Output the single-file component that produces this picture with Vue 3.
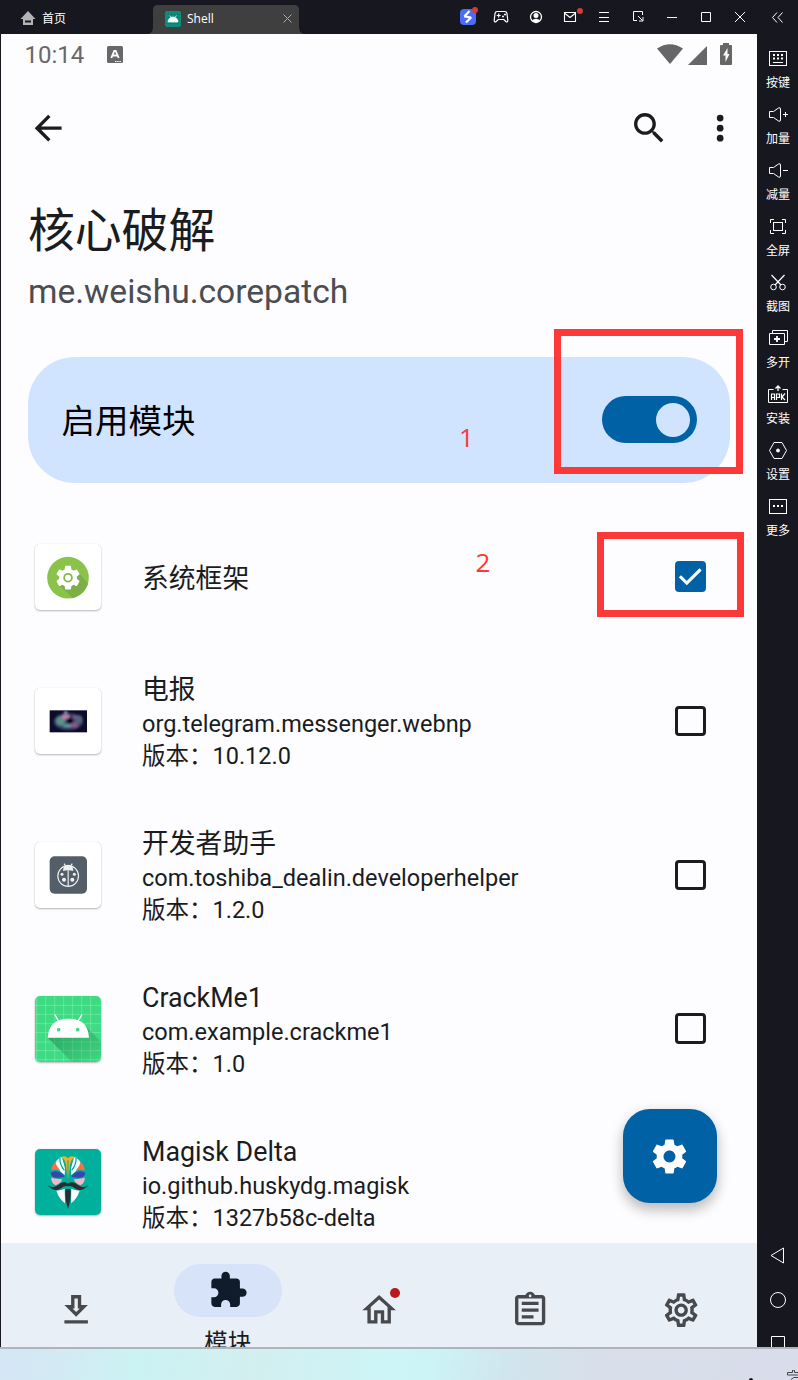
<script setup>
const tools = [
  { id: 'keys', label: '按键' },
  { id: 'volup', label: '加量' },
  { id: 'voldown', label: '减量' },
  { id: 'full', label: '全屏' },
  { id: 'cut', label: '截图' },
  { id: 'multi', label: '多开' },
  { id: 'apk', label: '安装' },
  { id: 'set', label: '设置' },
  { id: 'more', label: '更多' },
]

const apps = [
  { id: 'system', name: '系统框架', checked: true },
  { id: 'telegram', name: '电报', pkg: 'org.telegram.messenger.webnp', version: '10.12.0' },
  { id: 'helper', name: '开发者助手', pkg: 'com.toshiba_dealin.developerhelper', version: '1.2.0' },
  { id: 'crackme', name: 'CrackMe1', pkg: 'com.example.crackme1', version: '1.0' },
  { id: 'magisk', name: 'Magisk Delta', pkg: 'io.github.huskydg.magisk', version: '1327b58c-delta' },
]

const gear =
  'M19.43 12.98c.04-.32.07-.64.07-.98s-.03-.66-.07-.98l2.11-1.65c.19-.15.24-.42.12-.64l-2-3.46c-.12-.22-.39-.3-.61-.22l-2.49 1c-.52-.4-1.08-.73-1.69-.98l-.38-2.65C14.46 2.18 14.25 2 14 2h-4c-.25 0-.46.18-.49.42l-.38 2.65c-.61.25-1.17.59-1.69.98l-2.49-1c-.23-.09-.49 0-.61.22l-2 3.46c-.13.22-.07.49.12.64l2.11 1.65c-.04.32-.07.65-.07.98s.03.66.07.98l-2.11 1.65c-.19.15-.24.42-.12.64l2 3.46c.12.22.39.3.61.22l2.49-1c.52.4 1.08.73 1.69.98l.38 2.65c.03.24.24.42.49.42h4c.25 0 .46-.18.49-.42l.38-2.65c.61-.25 1.17-.59 1.69-.98l2.49 1c.23.09.49 0 .61-.22l2-3.46c.12-.22.07-.49-.12-.64l-2.11-1.65zM12 15.5c-1.93 0-3.5-1.57-3.5-3.5s1.57-3.5 3.5-3.5 3.5 1.57 3.5 3.5-1.57 3.5-3.5 3.5z'

const navItems = [
  {
    id: 'download',
    path: 'M19 9h-4V3H9v6H5l7 7 7-7zm-8 2V5h2v6h1.17L12 13.17 9.83 11H11zm-6 7h14v2H5z',
  },
  {
    id: 'modules',
    label: '模块',
    path: 'M20.5 11H19V7c0-1.1-.9-2-2-2h-4V3.5C13 2.12 11.88 1 10.5 1S8 2.12 8 3.5V5H4c-1.1 0-1.99.9-1.99 2v3.8H3.5c1.49 0 2.7 1.21 2.7 2.7s-1.21 2.7-2.7 2.7H2V20c0 1.1.9 2 2 2h3.8v-1.5c0-1.49 1.21-2.7 2.7-2.7 1.49 0 2.7 1.21 2.7 2.7V22H17c1.1 0 2-.9 2-2v-4h1.5c1.38 0 2.5-1.12 2.5-2.5S21.88 11 20.5 11z',
  },
  {
    id: 'home',
    badge: true,
    path: 'M12 5.69l5 4.5V18h-2v-6H9v6H7v-7.81l5-4.5M12 3L2 12h3v8h6v-6h2v6h6v-8h3L12 3z',
  },
  {
    id: 'logs',
    path: 'M7 15h7v2H7zm0-4h10v2H7zm0-4h10v2H7zm12-4h-4.18C14.4 1.84 13.3 1 12 1s-2.4.84-2.82 2H5c-1.1 0-2 .9-2 2v14c0 1.1.9 2 2 2h14c1.1 0 2-.9 2-2V5c0-1.1-.9-2-2-2zm-7-.25c.41 0 .75.34.75.75s-.34.75-.75.75-.75-.34-.75-.75.34-.75.75-.75zM19 19H5V5h14v14z',
  },
  {
    id: 'settings',
    path: 'M19.43 12.98c.04-.32.07-.64.07-.98s-.03-.66-.07-.98l2.11-1.65c.19-.15.24-.42.12-.64l-2-3.46c-.09-.16-.26-.25-.44-.25-.06 0-.12.01-.17.03l-2.49 1c-.52-.4-1.08-.73-1.69-.98l-.38-2.65C14.46 2.18 14.25 2 14 2h-4c-.25 0-.46.18-.49.42l-.38 2.65c-.61.25-1.17.59-1.69.98l-2.49-1c-.06-.02-.12-.03-.18-.03-.17 0-.34.09-.43.25l-2 3.46c-.13.22-.07.49.12.64l2.11 1.65c-.04.32-.07.65-.07.98s.03.66.07.98l-2.11 1.65c-.19.15-.24.42-.12.64l2 3.46c.09.16.26.25.44.25.06 0 .12-.01.17-.03l2.49-1c.52.4 1.08.73 1.69.98l.38 2.65c.03.24.24.42.49.42h4c.25 0 .46-.18.49-.42l.38-2.65c.61-.25 1.17-.59 1.69-.98l2.49 1c.06.02.12.03.18.03.17 0 .34-.09.43-.25l2-3.46c.12-.22.07-.49-.12-.64l-2.11-1.65zm-1.98-1.71c.04.31.05.52.05.73 0 .21-.02.43-.05.73l-.14 1.13.89.7 1.08.84-.7 1.21-1.27-.51-1.04-.42-.9.68c-.43.32-.84.56-1.25.73l-1.06.43-.16 1.13-.2 1.35h-1.4l-.19-1.35-.16-1.13-1.06-.43c-.43-.18-.83-.41-1.23-.71l-.91-.7-1.06.43-1.27.51-.7-1.21 1.08-.84.89-.7-.14-1.13c-.03-.31-.05-.54-.05-.74s.02-.43.05-.73l.14-1.13-.89-.7-1.08-.84.7-1.21 1.27.51 1.04.42.9-.68c.43-.32.84-.56 1.25-.73l1.06-.43.16-1.13.2-1.35h1.39l.19 1.35.16 1.13 1.06.43c.43.18.83.41 1.23.71l.91.7 1.06-.43 1.27-.51.7 1.21-1.07.85-.89.7.14 1.13zM12 8c-2.21 0-4 1.79-4 4s1.79 4 4 4 4-1.79 4-4-1.79-4-4-4zm0 6c-1.1 0-2-.9-2-2s.9-2 2-2 2 .9 2 2-.9 2-2 2z',
  },
]
</script>

<template>
  <div class="desktop">
    <div class="window">
      <header class="titlebar">
        <div class="home-tab">
          <svg width="16" height="16" viewBox="0 0 16 16"><path d="M8 1L.5 9H3v6h10V9h2.500z" fill="#b4b4b6" /><path d="M5 11.500h6" stroke="#17171f" stroke-width="2" /></svg>
          <span>首页</span>
        </div>
        <div class="tab">
          <svg class="flare" width="156" height="29" viewBox="0 0 156 29"><path d="M0 29Q5 28 5 22V5Q5 0 10 0H146Q151 0 151 5V22Q151 28 156 29Z" fill="#3f3f3f" /></svg>
          <svg class="tab-icon" width="16" height="16" viewBox="0 0 16 16"><rect width="16" height="16" rx="2" fill="#0b8f7f" /><path d="M0 3.500h16M0 6.500h16M0 9.500h16M0 12.500h16M3.500 0v16M6.500 0v16M9.500 0v16M12.500 0v16" stroke="#0a7f71" stroke-width=".5" /><path d="M3 11a5 5 0 0 1 10 0zM4.500 4.500l1.500 2M11.500 4.500l-1.500 2" fill="#fff" stroke="#fff" stroke-width=".7" /></svg>
          <span class="tab-name">Shell</span>
          <svg class="tab-close" width="9" height="9" viewBox="0 0 9 9"><path d="M.5.5l8 8M8.500.5l-8 8" stroke="#a8a8a8" /></svg>
        </div>
        <div class="controls">
          <div class="ctl">
            <svg width="22" height="22" viewBox="0 0 22 22"><rect x="3" y="3" width="16" height="16" rx="4" fill="#4b6df5" /><path d="M12.500 5L7.500 10.300l6.500 1.200-5 5" fill="none" stroke="#fff" stroke-width="2.200" stroke-linejoin="bevel" /><circle cx="18" cy="4" r="3" fill="#d13b3b" /></svg>
          </div>
          <div class="ctl game">
            <svg width="16" height="14" viewBox="0 0 16 14"><path d="M4 1.500h8Q13.500 1.500 14 3.500L14.800 10.500Q14.500 12.700 12.800 11.500L10.800 9.500H5.200L3.200 11.500Q1.500 12.700 1.200 10.500L2 3.500Q2.500 1.500 4 1.500z" fill="none" stroke="#fff" stroke-width="1.200" /><path d="M5.700 3.500v4M3.700 5.500h4" stroke="#fff" stroke-width="1.200" /><circle cx="12" cy="4.500" r="1" fill="#fff" /><circle cx="10" cy="6.500" r="1" fill="#fff" /></svg>
          </div>
          <div class="ctl">
            <svg width="14" height="14" viewBox="0 0 14 14"><circle cx="7" cy="7" r="5.500" fill="none" stroke="#fff" stroke-width="1.300" /><circle cx="7" cy="5.500" r="2.500" fill="#fff" /><path d="M2.500 10.500Q7 7 11.500 10.500Q7 14.500 2.500 10.500z" fill="#fff" /></svg>
          </div>
          <div class="ctl">
            <svg width="28" height="20" viewBox="0 0 28 20"><path d="M8.500 5.500h11v9h-11zM9 6.500l5 4 5-4" fill="none" stroke="#fff" stroke-width="1.100" /><circle cx="24" cy="4" r="3" fill="#d13b3b" /></svg>
          </div>
          <div class="ctl">
            <svg width="10" height="10" viewBox="0 0 10 10"><path d="M0 .5h10M0 5.500h10M0 9.500h10" stroke="#fff" /></svg>
          </div>
          <div class="ctl">
            <svg width="11" height="11" viewBox="0 0 11 11"><path d="M4 9.500H.5v-9h9V4M5 5l4.500 4.500M10 6v4H6" fill="none" stroke="#fff" /></svg>
          </div>
          <div class="ctl"><svg width="10" height="10" viewBox="0 0 10 10"><path d="M0 5.500h10" stroke="#fff" /></svg></div>
          <div class="ctl"><svg width="10" height="10" viewBox="0 0 10 10"><path d="M.5.5h9v9h-9z" fill="none" stroke="#fff" /></svg></div>
          <div class="ctl"><svg width="10" height="10" viewBox="0 0 10 10"><path d="M0 0l10 10M10 0L0 10" stroke="#fff" /></svg></div>
          <div class="ctl last"><svg width="11" height="11" viewBox="0 0 11 11"><path d="M5 .5l-4.500 5 4.500 5M10.500.5L6 5.500l4.500 5" fill="none" stroke="#fff" /></svg></div>
        </div>
      </header>

      <div class="body">
        <main class="phone">
          <div class="statusbar">
            <span class="clock">10:14</span>
            <svg class="ime" width="16" height="17" viewBox="0 0 16 17"><rect width="16" height="17" rx="1.500" fill="#686869" /><path d="M4.300 12L7.300 5h1.400l3 7M5.700 9.500h4.600" fill="none" stroke="#fdfcff" stroke-width="1.900" /><path d="M8 15.500h6" stroke="#fdfcff" stroke-dasharray="1.500 .7" /></svg>
            <div class="signals">
              <svg width="26" height="20" viewBox="0 0 26 20"><path d="M0 4.500Q13-4 26 4.500L13 20z" fill="#666667" /></svg>
              <svg width="19" height="19" viewBox="0 0 19 19"><path d="M19 0v19H0z" fill="#666667" /></svg>
              <svg width="12" height="22" viewBox="0 0 12 22"><path d="M3 0h6v2h2q1 0 1 1v18q0 1-1 1H1q-1 0-1-1V3q0-1 1-1h2z" fill="#666667" /><path d="M7.500 5L3 12.500h2.500V19L9.500 11H7.500z" fill="#fdfcff" /></svg>
            </div>
          </div>

          <div class="appbar">
            <svg class="mi" viewBox="0 0 24 24"><path d="M20 11H7.830l5.590-5.590L12 4l-8 8 8 8 1.410-1.410L7.830 13H20z" /></svg>
            <span class="grow"></span>
            <svg class="mi search" viewBox="0 0 24 24"><path d="M15.500 14h-.79l-.28-.27C15.410 12.590 16 11.110 16 9.500 16 5.910 13.090 3 9.500 3S3 5.910 3 9.500 5.910 16 9.500 16c1.610 0 3.090-.59 4.230-1.570l.27.28v.79l5 4.990L20.490 19l-4.990-5zm-6 0C7.010 14 5 11.990 5 9.500S7.010 5 9.500 5 14 7.010 14 9.500 11.990 14 9.500 14z" /></svg>
            <svg class="mi" viewBox="0 0 24 24"><circle cx="12" cy="6" r="2" /><circle cx="12" cy="12" r="2" /><circle cx="12" cy="18" r="2" /></svg>
          </div>

          <h1 class="title">核心破解</h1>
          <p class="subtitle">me.weishu.corepatch</p>

          <section class="enable">
            <span>启用模块</span>
            <div class="switch"><i></i></div>
          </section>

          <div class="list">
            <div v-for="app in apps" :key="app.id" class="row" :class="{ single: !app.pkg }">
              <div class="app-icon" :class="app.id">
                <svg v-if="app.id === 'system'" viewBox="45 40 198 198">
                  <defs><clipPath id="sysc"><circle cx="144" cy="141" r="62.500" /></clipPath></defs>
                  <circle cx="144" cy="141" r="62.500" fill="#8bc34a" />
                  <path d="M118 163L170 215 230 190 172 120z" fill="#7cb046" clip-path="url(#sysc)" />
                  <g transform="translate(101.500 98.500) scale(3.550)"><path :d="gear" fill="#fff" /><circle cx="12" cy="12" r="3.700" fill="#fff" /><circle cx="12" cy="12" r="3.300" fill="none" stroke="#84bb48" stroke-width="1.500" /></g>
                </svg>
                <svg v-else-if="app.id === 'telegram'" viewBox="45 473 198 198">
                  <defs>
                    <clipPath id="tgc"><rect x="89" y="540" width="112" height="66" /></clipPath>
                    <filter id="tgb" x="-50%" y="-50%" width="200%" height="200%"><feGaussianBlur stdDeviation="3.500" /></filter>
                  </defs>
                  <rect x="89" y="540" width="112" height="66" fill="#0d0a2b" />
                  <g clip-path="url(#tgc)"><g filter="url(#tgb)">
                    <ellipse cx="145" cy="574" rx="44" ry="26" fill="#35405f" />
                    <ellipse cx="122" cy="572" rx="14" ry="14" fill="#5b8f8a" />
                    <ellipse cx="137" cy="559" rx="12" ry="7" fill="#c07ba8" />
                    <ellipse cx="176" cy="567" rx="12" ry="13" fill="#55607f" />
                    <ellipse cx="163" cy="584" rx="11" ry="8" fill="#8c5688" />
                    <ellipse cx="165" cy="560" rx="8" ry="5" fill="#7b5a8c" />
                    <ellipse cx="137" cy="546" rx="5" ry="5" fill="#7fb0c0" />
                    <ellipse cx="142" cy="586" rx="13" ry="5" fill="#6796a0" />
                    <circle cx="150" cy="571" r="9" fill="#09000c" />
                  </g></g>
                </svg>
                <svg v-else-if="app.id === 'helper'" viewBox="45 65 198 198">
                  <rect x="89" y="108" width="112" height="112" rx="15" fill="#535e68" />
                  <g fill="none" stroke="#eef0f1" stroke-width="3.500"><ellipse cx="144.500" cy="167" rx="31" ry="31" /><path d="M144.500 150v48M132 130l6 8M157 130l-6 8" /></g>
                  <g fill="#eef0f1"><path d="M129 152Q130 133 144.500 133T160 152Q144.500 147 129 152z" /><circle cx="126" cy="162" r="4.500" /><circle cx="163" cy="162" r="4.500" /><circle cx="132" cy="178" r="6" /><circle cx="157" cy="178" r="6" /></g>
                </svg>
                <svg v-else-if="app.id === 'crackme'" viewBox="45 528 198 198">
                  <defs><linearGradient id="sh" x1="0" y1="0" x2="1" y2="1"><stop offset="0" stop-color="#1d7a48" stop-opacity=".6" /><stop offset=".75" stop-color="#1d7a48" stop-opacity=".18" /><stop offset="1" stop-color="#1d7a48" stop-opacity="0" /></linearGradient></defs>
                  <rect x="45" y="528" width="198" height="198" fill="#3ddc84" />
                  <path d="M50 528v198M77 528v198M104 528v198M131 528v198M158 528v198M185 528v198M212 528v198M45 556h198M45 583h198M45 611h198M45 638h198M45 666h198M45 692h198M45 719h198" stroke="#fff" stroke-opacity=".33" stroke-width="2" />
                  <path d="M83 653L156 726H243V666L200 622z" fill="url(#sh)" />
                  <path d="M83 653Q86 597 145 596T207 653z" fill="#fff" />
                  <path d="M105 585l13 22M185 585l-13 22" stroke="#fff" stroke-width="4" stroke-linecap="round" />
                  <circle cx="116" cy="629" r="5.500" fill="#3ddc84" /><circle cx="173" cy="629" r="5.500" fill="#3ddc84" />
                </svg>
                <svg v-else viewBox="15 27 198 198">
                  <rect x="15" y="27" width="198" height="198" fill="#00af9c" />
                  <g id="half">
                    <path d="M104 105Q80 87 76 68Q84 54 95 51Q98 58 105 86z" fill="#fff" />
                    <path d="M90 54Q88 72 103 91" fill="none" stroke="#00af9c" stroke-width="4" />
                    <path d="M63 91Q65 76 75 66Q80 80 90 91Q77 88 63 91z" fill="#ff6e40" />
                    <path d="M62 98Q74 90 88 96Q100 101 104 110Q80 116 69 111Q62 106 62 98z" fill="#3646ae" />
                    <path d="M64 112Q69 117 97 118Q94 129 77 136Q62 129 64 112z" fill="#f4b9c4" />
                    <path d="M51 134Q62 144 78 139Q86 135 92 130Q102 123 114 130V139Q102 136 90 147Q72 157 51 134z" fill="#272e31" />
                    <path d="M79 152Q95 151 104 146L105 190Q87 176 79 152z" fill="#fff" />
                  </g>
                  <use href="#half" transform="matrix(-1 0 0 1 228 0)" />
                  <path d="M94 52Q99 46 109 50Q114 58 119 50Q129 46 134 52Q119 60 119 86L114 120L109 86Q109 60 94 52z" fill="#f9ad1d" />
                  <path d="M114 61V119" stroke="#00af9c" stroke-width="3" />
                  <path d="M106 148Q114 144 122 148Q124 175 114 207Q104 175 106 148z" fill="#272e31" />
                </svg>
              </div>
              <div class="texts">
                <div class="name">{{ app.name }}</div>
                <div v-if="app.pkg" class="sub">{{ app.pkg }}</div>
                <div v-if="app.pkg" class="sub ver">版本：{{ app.version }}</div>
              </div>
              <div class="check" :class="{ on: app.checked }">
                <svg v-if="app.checked" viewBox="0 0 31 31"><path d="M5 15.500l7 7L26 8.500" fill="none" stroke="#fff" stroke-width="3.200" /></svg>
              </div>
            </div>
          </div>

          <div class="fab"><svg viewBox="0 0 24 24"><path :d="gear" /></svg></div>

          <nav class="bottom">
            <div v-for="n in navItems" :key="n.id" class="nav" :class="{ active: n.label }">
              <div class="pill">
                <svg viewBox="0 0 24 24"><path :d="n.path" fill-rule="evenodd" /></svg>
                <i v-if="n.badge" class="badge"></i>
              </div>
              <span v-if="n.label">{{ n.label }}</span>
            </div>
          </nav>

          <div class="mark box-one"></div>
          <div class="mark box-two"></div>
          <span class="num num-one">1</span>
          <span class="num num-two">2</span>
        </main>

        <aside class="side">
          <div v-for="t in tools" :key="t.id" class="tool">
            <svg width="22" height="22" viewBox="0 0 22 22" fill="none" stroke="#fff">
              <template v-if="t.id === 'keys'"><rect x="2.500" y="4.500" width="17" height="14" /><path d="M6 8h2M10 8h2M14 8h2M6 11.500h2M10 11.500h2M14 11.500h2" stroke-width="1.800" /><path d="M6 15.500h10" /></template>
              <template v-else-if="t.id === 'volup' || t.id === 'voldown'">
                <path d="M2.500 8.500h4l5-3.500q2-1 2 1v11q0 2-2 1l-5-3.500h-4z" />
                <path d="M16 11.500h5" /><path v-if="t.id === 'volup'" d="M18.500 9v5" />
              </template>
              <template v-else-if="t.id === 'full'"><rect x="6.500" y="7.500" width="9" height="8" /><path d="M3.500 8V4.500H7M15 4.500h3.500V8M18.500 15v3.500H15M7 18.500H3.500V15" /></template>
              <template v-else-if="t.id === 'cut'"><circle cx="6.500" cy="16" r="2.800" /><circle cx="15.500" cy="16" r="2.800" /><path d="M4.500 4l9.500 10M17.500 4L8 14" stroke-width="1.200" /></template>
              <template v-else-if="t.id === 'multi'"><path d="M5.500 6.500V3.500h15v11H18M2.500 6.500h15v11h-15z" /><path d="M10 9v6M7 12h6" stroke-width="1.800" /></template>
              <template v-else-if="t.id === 'apk'"><path d="M6.500 6.500h-5v13h19v-13h-5" /><path d="M11 8V3.500M8.500 5.500L11 3l2.500 2.500" stroke-width="1.300" /><path d="M4.500 17v-6h3v6M4.500 14.500h3M9.500 17v-6h3v3.500h-3M14.500 10.500V17M18 10.500l-3 3.500 3 3" stroke-width="1.200" /></template>
              <template v-else-if="t.id === 'set'"><path d="M7 3.500h8l4.500 8-4.500 8H7l-4.500-8z" /><circle cx="11" cy="11.500" r="1.500" fill="#fff" /></template>
              <template v-else><rect x="2.500" y="4.500" width="17" height="14" /><path d="M6 11h2M10 11h2M14 11h2" stroke-width="1.800" /></template>
            </svg>
            <span>{{ t.label }}</span>
          </div>
          <div class="sys">
            <svg width="16" height="17" viewBox="0 0 16 17"><path d="M13.500 1v15L1 8.500z" /></svg>
            <svg width="16" height="16" viewBox="0 0 16 16"><circle cx="8" cy="8" r="7.500" /></svg>
            <svg width="16" height="14" viewBox="0 0 16 14"><path d="M1.500.5h13v13h-13z" /></svg>
          </div>
        </aside>
      </div>
    </div>
    <footer class="taskbar">
      <svg width="50" height="10" viewBox="0 0 50 10"><circle cx="3" cy="10" r="2" fill="#17171f" /><path d="M39.500 2.500h5V0h2v2.500h4M39.500 2.500v2.500h11M43 9.500q2-3 7-2" fill="none" stroke="#44464c" stroke-width="1" /></svg>
    </footer>
  </div>
</template>

<style>
body {
  margin: 0;
}
</style>

<style scoped>
.desktop {
  width: 798px;
  height: 1380px;
  overflow: hidden;
  display: flex;
  flex-direction: column;
  font-family: Roboto, "Noto Sans CJK SC", sans-serif;
}
svg {
  display: block;
  flex: none;
}
.window {
  height: 1347px;
  flex: none;
  display: flex;
  flex-direction: column;
  overflow: hidden;
  background: #17171f;
}
.titlebar {
  height: 34px;
  flex: none;
  display: flex;
  align-items: center;
  color: #fff;
  font: 12px/16px "Open Sans", "Noto Sans CJK SC", sans-serif;
}
.home-tab {
  width: 133px;
  padding-left: 20px;
  display: flex;
  align-items: center;
  gap: 6px;
  padding-top: 2px;
}
.home-tab span {
  padding-top: 1px;
}
.tab {
  position: relative;
  width: 146px;
  height: 29px;
  margin-top: 4px;
  display: flex;
  align-items: center;
  box-sizing: border-box;
  padding: 0 7px 0 12px;
}
.flare {
  position: absolute;
  left: -5px;
  top: 0;
}
.tab-icon,
.tab-name,
.tab-close {
  position: relative;
}
.tab-icon {
  margin-top: -1px;
}
.tab-close {
  margin-top: -2px;
}
.tab-name {
  flex: 1;
  padding-left: 6px;
}
.controls {
  margin-left: auto;
  display: flex;
}
.ctl {
  width: 34px;
  height: 34px;
  display: flex;
  align-items: center;
  justify-content: center;
}
.ctl.game {
  box-sizing: border-box;
  padding-right: 2px;
}
.ctl.last {
  width: 41px;
  padding-top: 1px;
}
.body {
  flex: 1;
  min-height: 0;
  display: flex;
}
.phone {
  position: relative;
  width: 756px;
  margin-left: 1px;
  background: #fdfcff;
  color: #1a1c1e;
  display: flex;
  flex-direction: column;
  overflow: hidden;
}
.statusbar {
  height: 41px;
  margin-bottom: 1px;
  flex: none;
  display: flex;
  align-items: center;
  padding: 0 25px 0 23.500px;
  color: #686869;
}
.clock {
  font-size: 24px;
  line-height: 42px;
  width: 82px;
}
.signals {
  margin-left: auto;
  margin-top: -1px;
  display: flex;
  align-items: center;
}
.signals svg:nth-child(2) {
  margin-left: 5px;
  margin-right: 13px;
  margin-top: 3px;
}
.appbar {
  height: 104px;
  flex: none;
  display: flex;
  align-items: center;
  padding: 0 17px 0 27px;
}
.mi {
  width: 40.300px;
  height: 40.300px;
  fill: #1a1c1e;
}
.grow {
  flex: 1;
}
.search {
  margin-right: 30.500px;
}
.title {
  margin: 17px 0 0 27px;
  height: 68px;
  flex: none;
  font-size: 46.800px;
  line-height: 68px;
  font-weight: 400;
}
.subtitle {
  margin: 5px 0 0 27px;
  height: 44px;
  flex: none;
  font-size: 33.600px;
  line-height: 44px;
  color: #4b4d51;
}
.enable {
  flex: none;
  margin: 43px 27px 0 27px;
  height: 125.500px;
  border-radius: 47px;
  background: #d1e4ff;
  display: flex;
  align-items: center;
  justify-content: space-between;
  padding: 0 33.500px 0 33.500px;
  font-size: 33.500px;
  color: #000;
}
.enable span {
  margin-top: -3px;
}
.switch {
  width: 94.500px;
  height: 47px;
  border-radius: 24px;
  background: #0061a4;
  box-sizing: border-box;
  padding: 6.500px;
  display: flex;
  justify-content: flex-end;
}
.switch i {
  width: 34px;
  height: 34px;
  border-radius: 50%;
  background: #d1e4ff;
}
.list {
  margin-top: 27.500px;
  flex: none;
}
.row {
  height: 153.850px;
  display: flex;
  align-items: center;
  padding: 0 51.500px 0 34px;
}
.row.single {
  height: 134px;
}
.app-icon {
  width: 66px;
  height: 66px;
  border-radius: 5px;
  overflow: hidden;
  background: #fff;
  box-shadow: 0 1px 2px rgba(0, 0, 0, 0.280), 0 0 1px rgba(0, 0, 0, 0.120);
}
.app-icon svg {
  width: 66px;
  height: 66px;
}
.texts {
  flex: 1;
  margin-left: 41px;
  padding-top: 3px;
}
.name {
  font-size: 26.800px;
  line-height: 36px;
}
.sub {
  font-size: 23.500px;
  line-height: 32px;
}
.check {
  width: 30.500px;
  height: 30.500px;
  box-sizing: border-box;
  border: 3.200px solid #1a1c1e;
  border-radius: 4px;
}
.check.on {
  border: 0;
  background: #0061a4;
  margin-top: -1px;
}
.fab {
  position: absolute;
  left: 621.500px;
  top: 1075px;
  width: 94px;
  height: 94px;
  border-radius: 27px;
  background: #0061a4;
  box-shadow: 0 8px 13px rgba(0, 0, 0, 0.200), 0 2px 14px rgba(0, 0, 0, 0.100);
  display: flex;
  align-items: center;
  justify-content: center;
}
.fab svg {
  width: 41px;
  height: 41px;
  fill: #fff;
}
.bottom {
  position: absolute;
  left: 0;
  right: 0;
  bottom: 0;
  height: 104px;
  background: #e8eff7;
  display: flex;
  overflow: hidden;
}
.nav {
  flex: 1;
  display: flex;
  flex-direction: column;
  align-items: center;
  padding-top: 40.500px;
}
.nav.active {
  padding-top: 20.500px;
}
.pill {
  position: relative;
  width: 108px;
  height: 53.500px;
  flex: none;
  border-radius: 27px;
  display: flex;
  align-items: center;
  justify-content: center;
}
.pill svg {
  width: 40.300px;
  height: 40.300px;
  fill: #47494c;
}
.active .pill {
  background: #d7e3f8;
}
.active .pill svg {
  fill: #101c2b;
}
.nav span {
  margin-top: 8.500px;
  flex: none;
  font-size: 23.500px;
  line-height: 34px;
}
.badge {
  position: absolute;
  left: 65px;
  top: 4.500px;
  width: 10px;
  height: 10px;
  border-radius: 50%;
  background: #ba1a1a;
}
.mark {
  position: absolute;
  box-sizing: border-box;
  border: 7px solid #fc3838;
}
.box-one {
  left: 553px;
  top: 295px;
  width: 189px;
  height: 145px;
}
.box-two {
  left: 596px;
  top: 498px;
  width: 147px;
  height: 85px;
}
.num {
  position: absolute;
  font: 26px/36px "Open Sans", sans-serif;
  color: #fc3838;
}
.num-one {
  left: 458px;
  top: 385px;
}
.num-two {
  left: 474.500px;
  top: 510px;
}
.side {
  width: 41px;
  display: flex;
  flex-direction: column;
  color: #fff;
}
.tool {
  height: 56px;
  flex: none;
  display: flex;
  flex-direction: column;
  align-items: center;
  padding: 13px 0 0 1px;
  box-sizing: border-box;
  font: 12px/16px "Noto Sans CJK SC", sans-serif;
}
.tool span {
  margin-top: 5px;
}
.sys {
  margin-top: auto;
  height: 100.500px;
  flex: none;
  display: flex;
  flex-direction: column;
  align-items: center;
  overflow: hidden;
}
.sys svg {
  fill: none;
  stroke: #fff;
}
.sys svg + svg {
  margin-top: 28px;
}
.taskbar {
  flex: 1;
  border-top: 2px solid #aeb4ba;
  background: linear-gradient(100deg, #d5e6f5 0, #d2eaf3 60px, #cbf3f4 140px, #d3eff0 250px, #cdf5f7 390px, #ccf3f5 430px, #d0e6ee 500px, #d7dfea 580px, #d9dcea 798px);
  display: flex;
  align-items: flex-end;
  justify-content: flex-end;
}
</style>
